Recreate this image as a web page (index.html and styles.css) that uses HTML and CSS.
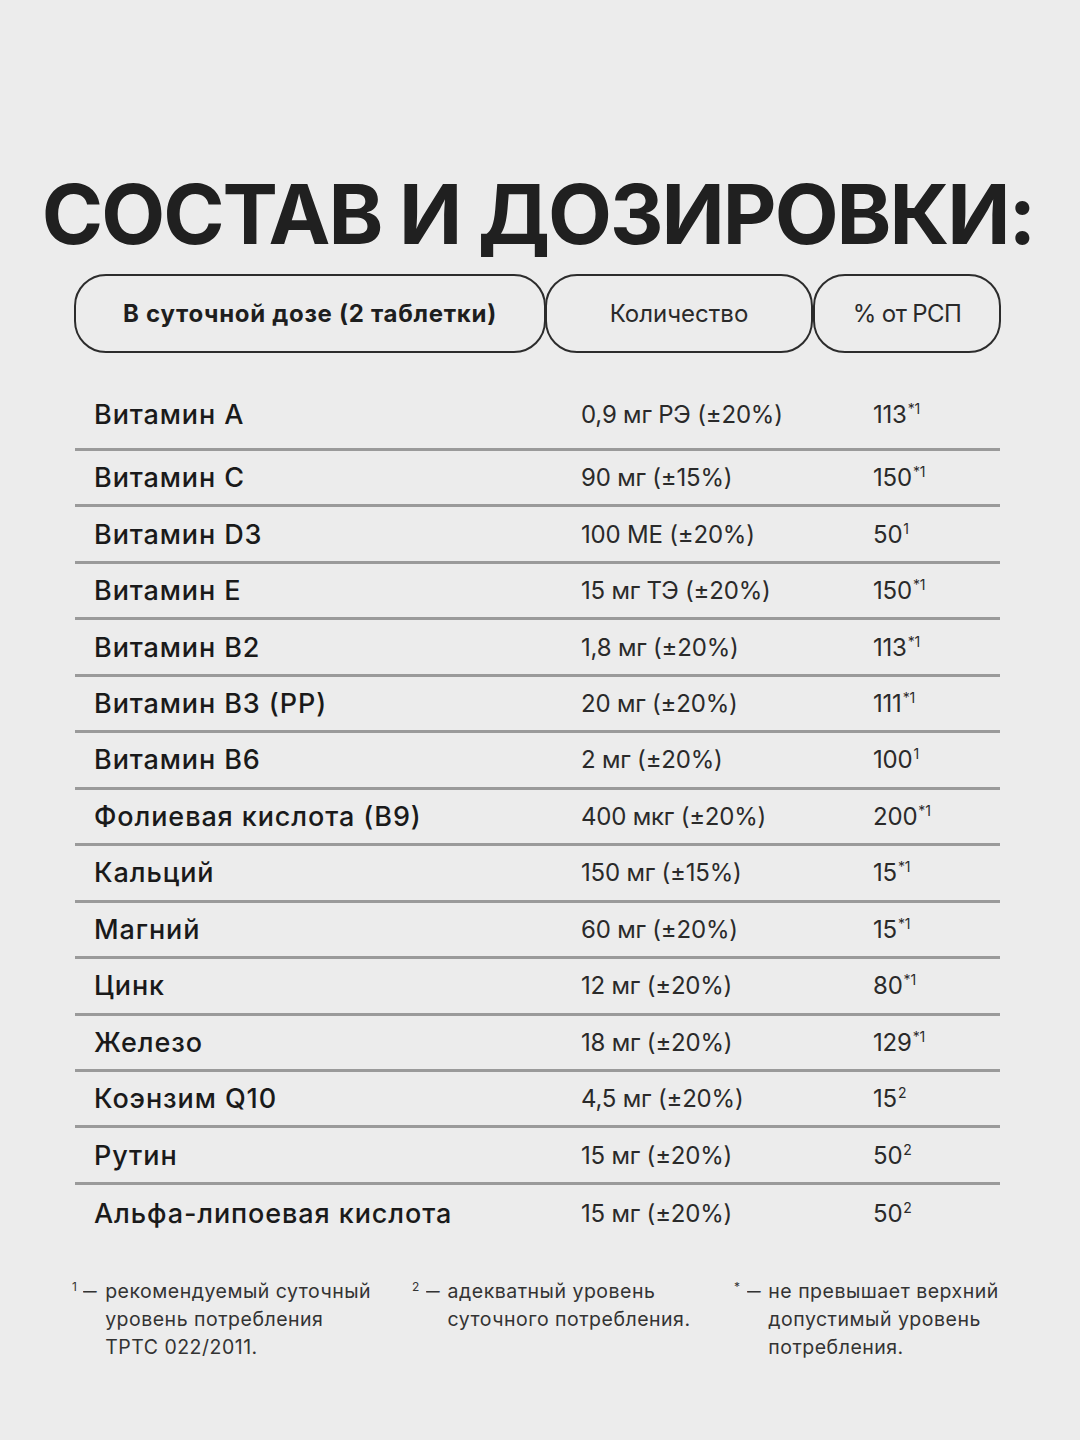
FILE: index.html
```html
<!DOCTYPE html>
<html lang="ru">
<head>
<meta charset="utf-8">
<title>Состав и дозировки</title>
<link rel="stylesheet" href="styles.css">
</head>
<body>
<div class="page">
  <h1 class="title">СОСТАВ И ДОЗИРОВКИ:</h1>
  <div class="head">
    <div class="pill pill-main">В суточной дозе (2 таблетки)</div>
    <div class="pill pill-qty">Количество</div>
    <div class="pill pill-pct">% от РСП</div>
  </div>
  <div class="table">
    <div class="row first"><span class="name">Витамин А</span><span class="qty">0,9 мг РЭ (±20%)</span><span class="pct">113<sup>*1</sup></span></div>
    <div class="row"><span class="name">Витамин С</span><span class="qty">90 мг (±15%)</span><span class="pct">150<sup>*1</sup></span></div>
    <div class="row"><span class="name">Витамин D3</span><span class="qty">100 МЕ (±20%)</span><span class="pct">50<sup>1</sup></span></div>
    <div class="row"><span class="name">Витамин Е</span><span class="qty">15 мг ТЭ (±20%)</span><span class="pct">150<sup>*1</sup></span></div>
    <div class="row"><span class="name">Витамин В2</span><span class="qty">1,8 мг (±20%)</span><span class="pct">113<sup>*1</sup></span></div>
    <div class="row"><span class="name">Витамин В3 (РР)</span><span class="qty">20 мг (±20%)</span><span class="pct">111<sup>*1</sup></span></div>
    <div class="row"><span class="name">Витамин В6</span><span class="qty">2 мг (±20%)</span><span class="pct">100<sup>1</sup></span></div>
    <div class="row"><span class="name">Фолиевая кислота (В9)</span><span class="qty">400 мкг (±20%)</span><span class="pct">200<sup>*1</sup></span></div>
    <div class="row"><span class="name">Кальций</span><span class="qty">150 мг (±15%)</span><span class="pct">15<sup>*1</sup></span></div>
    <div class="row"><span class="name">Магний</span><span class="qty">60 мг (±20%)</span><span class="pct">15<sup>*1</sup></span></div>
    <div class="row"><span class="name">Цинк</span><span class="qty">12 мг (±20%)</span><span class="pct">80<sup>*1</sup></span></div>
    <div class="row"><span class="name">Железо</span><span class="qty">18 мг (±20%)</span><span class="pct">129<sup>*1</sup></span></div>
    <div class="row"><span class="name">Коэнзим Q10</span><span class="qty">4,5 мг (±20%)</span><span class="pct">15<sup>2</sup></span></div>
    <div class="row"><span class="name">Рутин</span><span class="qty">15 мг (±20%)</span><span class="pct">50<sup>2</sup></span></div>
    <div class="row last"><span class="name">Альфа-липоевая кислота</span><span class="qty">15 мг (±20%)</span><span class="pct">50<sup>2</sup></span></div>
  </div>
  <div class="notes">
    <div class="note note-1"><span class="mark">1</span><span class="dash">–</span><span class="text">рекомендуемый суточный<br>уровень потребления<br>ТРТС 022/2011.</span></div>
    <div class="note note-2"><span class="mark">2</span><span class="dash">–</span><span class="text">адекватный уровень<br>суточного потребления.</span></div>
    <div class="note note-3"><span class="mark">*</span><span class="dash">–</span><span class="text">не превышает верхний<br>допустимый уровень<br>потребления.</span></div>
  </div>
</div>
</body>
</html>
```

FILE: styles.css
```css
html, body {
  margin: 0;
  padding: 0;
  background: #ececec;
}
body {
  font-family: Inter, "Noto Sans", "DejaVu Sans", sans-serif;
  color: #1c1c1c;
  width: 1080px;
  height: 1440px;
  overflow: hidden;
}
.page {
  padding-top: 166px;
}
.title {
  margin: 0 0 0 -4px;
  font-size: 83px;
  font-weight: 700;
  line-height: 96px;
  text-align: center;
  color: #202020;
  letter-spacing: -2px;
  white-space: nowrap;
}
.head {
  display: grid;
  grid-template-columns: 471px 268px 188px;
  margin: 12px 0 0 74px;
  height: 79px;
}
.pill {
  border: 2px solid #2c2c2c;
  border-radius: 32px;
  display: flex;
  align-items: center;
  justify-content: center;
  font-size: 24px;
  color: #1e1e1e;
  box-sizing: border-box;
}
.pill-main {
  font-weight: 700;
  margin-right: -1px;
  letter-spacing: 0.7px;
}
.pill-qty {
  font-weight: 400;
  color: #2a2a2a;
}
.pill-pct {
  font-weight: 400;
  color: #2a2a2a;
  letter-spacing: -0.6px;
}
.table {
  margin: 0 80px 0 75px;
}
.row {
  display: grid;
  grid-template-columns: 487px 292px 1fr;
  align-items: center;
  height: 56.46px;
  box-sizing: border-box;
  padding-left: 19px;
  border-bottom: 3px solid #9a9a9a;
  font-size: 27px;
}
.row.first {
  height: 98px;
  padding-top: 28px;
}
.row.last {
  border-bottom: none;
}
.name {
  font-weight: 500;
  color: #1a1a1a;
  letter-spacing: 0.9px;
}
.qty, .pct {
  font-weight: 400;
  color: #2a2a2a;
  font-size: 24px;
  letter-spacing: -0.2px;
}
.pct sup {
  font-size: 14px;
  vertical-align: 0;
  position: relative;
  top: -9px;
  margin-left: 1px;
}
.notes {
  display: grid;
  grid-template-columns: 340px 322px 1fr;
  margin: 36px 0 0 72px;
  font-size: 19.5px;
  line-height: 28px;
  color: #333;
  letter-spacing: 0.5px;
}
.note {
  display: flex;
  align-items: flex-start;
}
.mark {
  font-size: 12px;
  line-height: 20px;
  margin-right: 8px;
}
.dash {
  margin-right: 10px;
  letter-spacing: 0;
  transform: scaleX(1.4);
}
```
